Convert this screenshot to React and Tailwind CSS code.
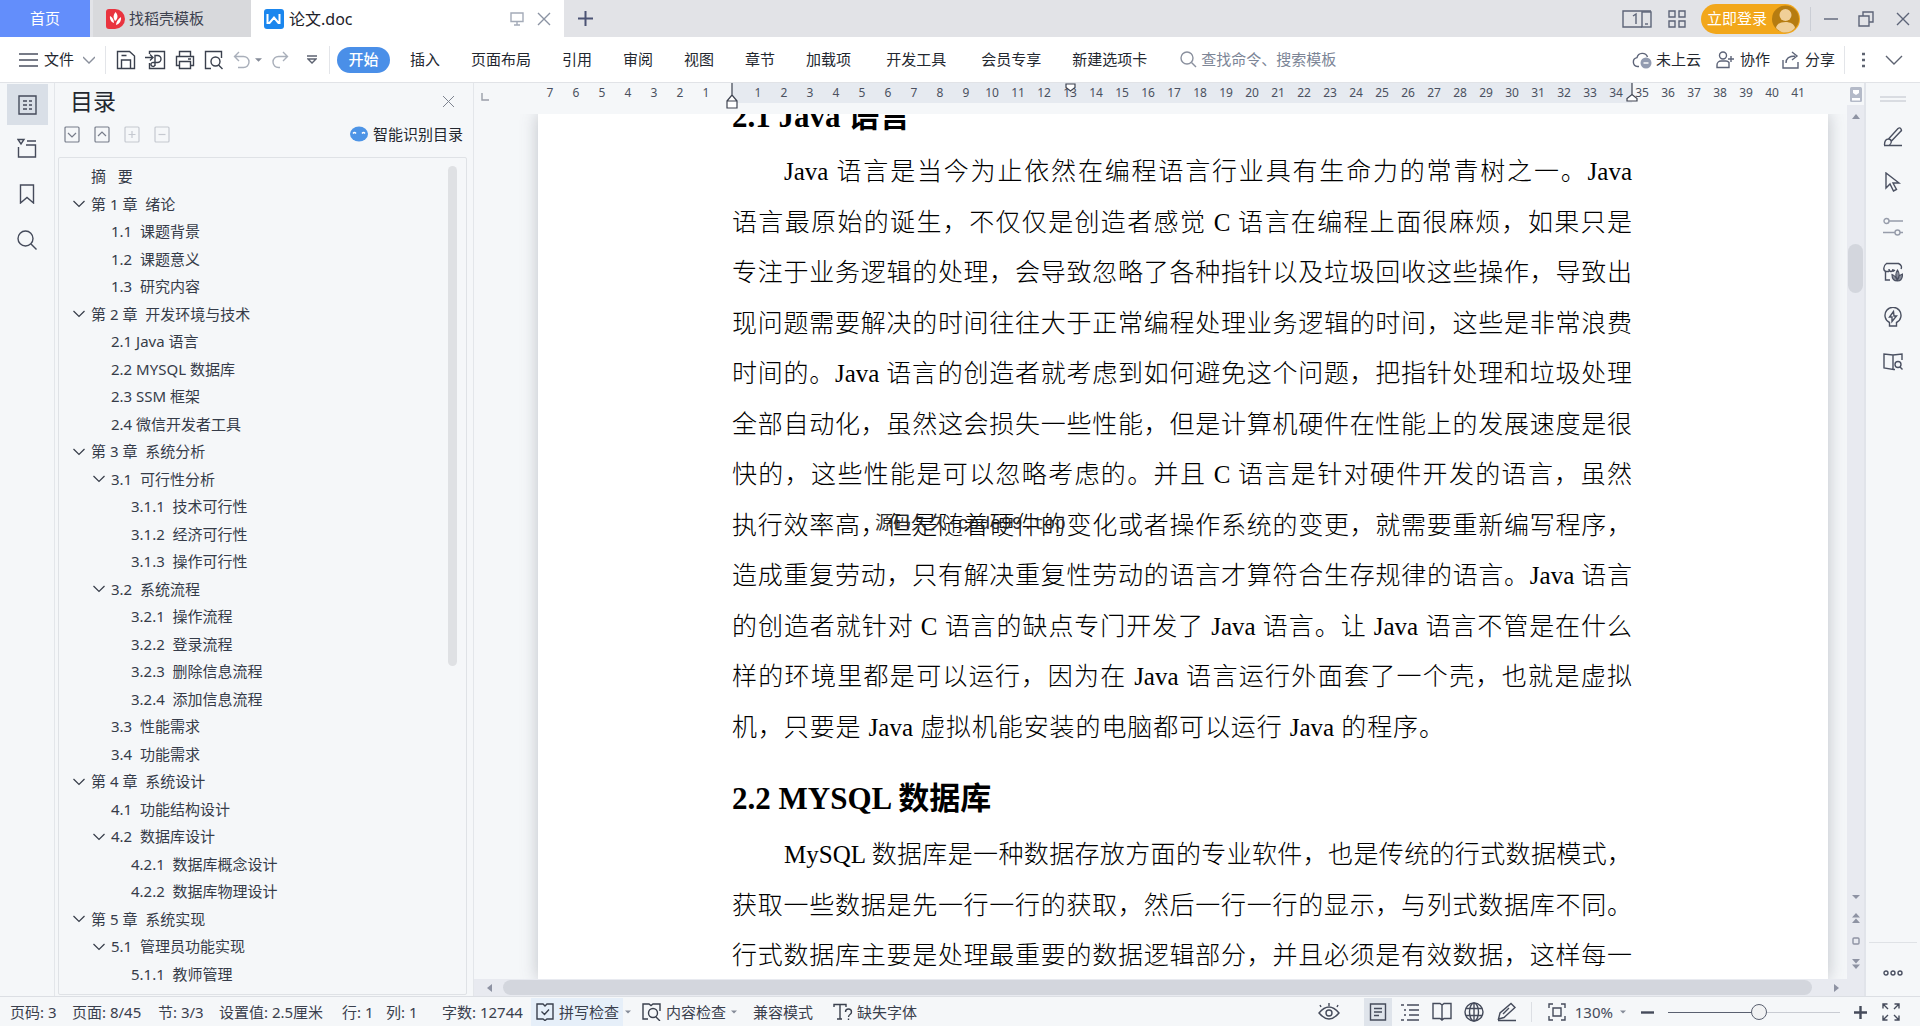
import React, { useState } from 'react'
import clsx from 'clsx'

const MENU = ['插入', '页面布局', '引用', '审阅', '视图', '章节', '加载项', '开发工具', '会员专享', '新建选项卡']

// level, title, has children
const OUTLINE = [
  [0, '摘   要', false],
  [0, '第 1 章  绪论', true],
  [1, '1.1  课题背景', false],
  [1, '1.2  课题意义', false],
  [1, '1.3  研究内容', false],
  [0, '第 2 章  开发环境与技术', true],
  [1, '2.1 Java 语言', false],
  [1, '2.2 MYSQL 数据库', false],
  [1, '2.3 SSM 框架', false],
  [1, '2.4 微信开发者工具', false],
  [0, '第 3 章  系统分析', true],
  [1, '3.1  可行性分析', true],
  [2, '3.1.1  技术可行性', false],
  [2, '3.1.2  经济可行性', false],
  [2, '3.1.3  操作可行性', false],
  [1, '3.2  系统流程', true],
  [2, '3.2.1  操作流程', false],
  [2, '3.2.2  登录流程', false],
  [2, '3.2.3  删除信息流程', false],
  [2, '3.2.4  添加信息流程', false],
  [1, '3.3  性能需求', false],
  [1, '3.4  功能需求', false],
  [0, '第 4 章  系统设计', true],
  [1, '4.1  功能结构设计', false],
  [1, '4.2  数据库设计', true],
  [2, '4.2.1  数据库概念设计', false],
  [2, '4.2.2  数据库物理设计', false],
  [0, '第 5 章  系统实现', true],
  [1, '5.1  管理员功能实现', true],
  [2, '5.1.1  教师管理', false],
]

const INDENT = ['pl-[12px]', 'pl-[32px]', 'pl-[52px]']

const JAVA_LINES = [
  'Java 语言是当今为止依然在编程语言行业具有生命力的常青树之一。Java',
  '语言最原始的诞生，不仅仅是创造者感觉 C 语言在编程上面很麻烦，如果只是',
  '专注于业务逻辑的处理，会导致忽略了各种指针以及垃圾回收这些操作，导致出',
  '现问题需要解决的时间往往大于正常编程处理业务逻辑的时间，这些是非常浪费',
  '时间的。Java 语言的创造者就考虑到如何避免这个问题，把指针处理和垃圾处理',
  '全部自动化，虽然这会损失一些性能，但是计算机硬件在性能上的发展速度是很',
  '快的，这些性能是可以忽略考虑的。并且 C 语言是针对硬件开发的语言，虽然',
  '执行效率高，但是随着硬件的变化或者操作系统的变更，就需要重新编写程序，',
  '造成重复劳动，只有解决重复性劳动的语言才算符合生存规律的语言。Java 语言',
  '的创造者就针对 C 语言的缺点专门开发了 Java 语言。让 Java 语言不管是在什么',
  '样的环境里都是可以运行，因为在 Java 语言运行外面套了一个壳，也就是虚拟',
  '机，只要是 Java 虚拟机能安装的电脑都可以运行 Java 的程序。',
]

const MYSQL_LINES = [
  'MySQL 数据库是一种数据存放方面的专业软件，也是传统的行式数据模式，',
  '获取一些数据是先一行一行的获取，然后一行一行的显示，与列式数据库不同。',
  '行式数据库主要是处理最重要的数据逻辑部分，并且必须是有效数据，这样每一',
]

const RULER = [7, 6, 5, 4, 3, 2, 1, '', ...Array.from({ length: 41 }, (_, i) => i + 1)]

function Svg({ w = 20, h = w, sw = 1.4, className, children }) {
  return (
    <svg
      width={w}
      height={h}
      viewBox={`0 0 ${w} ${h}`}
      fill="none"
      stroke="currentColor"
      strokeWidth={sw}
      className={clsx('block shrink-0', className)}
      aria-hidden="true"
    >
      {children}
    </svg>
  )
}

function IconButton({ label, className, children }) {
  return (
    <button type="button" aria-label={label} className={clsx('flex shrink-0 items-center justify-center', className)}>
      {children}
    </button>
  )
}

const Caret = ({ className }) => (
  <Svg w={8} h={4} className={className}>
    <path d="M0 0h8L4 4z" fill="currentColor" stroke="none" />
  </Svg>
)

function TitleBar() {
  return (
    <header className="flex h-[37px] shrink-0 bg-[#e2e3e7] text-[15px]">
      <button type="button" className="w-[90px] bg-[#638efb] text-white">首页</button>
      <button type="button" className="ml-[3px] flex w-[158px] items-center gap-1 bg-[#d8d9dc] pl-[13px] text-[#3d4250]">
        <Svg w={19} h={20}>
          <path d="M0 3a3 3 0 0 1 3-3h6a10 10 0 0 1 0 20H3a3 3 0 0 1-3-3z" fill="#e9333f" stroke="none" />
          <path d="M9.500 3c3 3 2.500 7-.5 9-2-3-2-6 .5-9zM4 7c2 1 4 3.500 4 7-3-1-4.500-4-4-7zM15 8c.5 4-1.500 7-5 8 0-3 2-6 5-8z" fill="#fff" stroke="none" />
        </Svg>
        找稻壳模板
      </button>
      <div className="flex w-[313px] items-center bg-white pl-[13px] text-[#1d2129]">
        <Svg w={20} h={20}>
          <rect width="20" height="20" rx="3" fill="#1a86ee" stroke="none" />
          <path d="M3.500 5v9h2L10 8.500l4.500 5.500h1V5" stroke="#fff" strokeWidth="2" />
        </Svg>
        <span className="ml-[5px] flex-1 text-base">论文.doc</span>
        <Svg w={14} h={14} className="text-[#a4abb8]">
          <path d="M1 1h12v8.500H1zM7 9.500V13M4 13h6" />
        </Svg>
        <IconButton label="关闭标签" className="mx-[13px] text-[#8b93a3]">
          <Svg w={14}><path d="M1 1l12 12M13 1L1 13" /></Svg>
        </IconButton>
      </div>
      <IconButton label="新建标签" className="w-[43px] text-[#4b5374]">
        <Svg w={15} sw={2}><path d="M7.500 0v15M0 7.500h15" /></Svg>
      </IconButton>
      <div className="ml-auto flex items-center pr-[10px] text-[#5d6478]">
        <IconButton label="视图模式">
          <Svg w={30} h={18}>
            <path d="M20 17H1V1h28M11 6l3-2v10" />
            <rect x="20" y="2" width="9" height="15" />
            <path d="M23 14h3" />
          </Svg>
        </IconButton>
        <IconButton label="应用" className="ml-4">
          <Svg w={18}>
            <path d="M1 1h6v6H1zM11 1h6v6h-6zM1 11h6v6H1zM11 11h6v6h-6z" />
          </Svg>
        </IconButton>
        <button type="button" className="ml-[15px] flex h-[30px] w-[99px] items-center justify-between rounded-full bg-[#f2a71b] pr-px pl-[6px] text-white">
          立即登录
          <Svg w={27} h={28}>
            <circle cx="13.500" cy="14" r="13.500" fill="#b67c10" stroke="none" />
            <circle cx="13.500" cy="10" r="6" fill="#f0cf98" stroke="none" />
            <path d="M4 23c1-8 18-8 19 0-5 6-14 6-19 0z" fill="#f0cf98" stroke="none" />
          </Svg>
        </button>
        <span className="mr-[11px] ml-[10px] h-6 w-px bg-[#cbced5]" />
        <IconButton label="最小化" className="w-[18px]">
          <Svg w={14}><path d="M0 7h14" /></Svg>
        </IconButton>
        <IconButton label="还原" className="ml-[18px] w-[16px]">
          <Svg w={16}><path d="M1 5h10v10H1zM5 5V1h10v10h-4" /></Svg>
        </IconButton>
        <IconButton label="关闭" className="ml-[22px] w-[14px]">
          <Svg w={14}><path d="M1 1l12 12M13 1L1 13" /></Svg>
        </IconButton>
      </div>
    </header>
  )
}

function Ribbon() {
  return (
    <div className="flex h-[46px] shrink-0 items-center border-b border-[#e1e3e7] bg-white text-[15px] text-[#23272f]">
      <button type="button" className="ml-[19px] flex items-center">
        <Svg w={19} h={16} className="text-[#4b5060]"><path d="M0 2h19M0 8h19M0 14h19" /></Svg>
        <span className="ml-[6px]">文件</span>
        <Svg w={12} h={8} className="ml-[9px] text-[#8a909c]"><path d="M0 1l6 6 6-6" /></Svg>
      </button>
      <span className="ml-[10px] h-7 w-px bg-[#e3e5e9]" />
      <div className="ml-[10px] flex items-center gap-[9px] text-[#3a404d]">
        <IconButton label="保存">
          <Svg>
            <path d="M1.500 1.500h12l5 4.500v12.500h-17zM5.500 18.500V10h9v8.500M5.500 5.500h5" />
          </Svg>
        </IconButton>
        <IconButton label="输出为PDF">
          <Svg w={21} h={20}>
            <path d="M4.500 4V1.500h15v17h-15V13M0 7.500h7M5 4.500l3 3-3 3M10 16V5.500h2.500a3 3 0 0 1 0 7H8.500a2 2 0 1 0 1.500 2" />
          </Svg>
        </IconButton>
        <IconButton label="打印">
          <Svg>
            <path d="M4.500 6V1.500h11V6M4.500 15.500h-3V6.500h17v9h-3M4.500 11.500h11v7h-11zM13 9h3" />
          </Svg>
        </IconButton>
        <IconButton label="打印预览">
          <Svg>
            <path d="M7 18.500H1.500v-17h16V8M14.500 15l4 4" />
            <circle cx="11.500" cy="11.500" r="4.500" />
          </Svg>
        </IconButton>
      </div>
      <div className="flex items-center text-[#a9afba]">
        <IconButton label="撤销" className="ml-[9px]">
          <Svg w={17} h={18}><path d="M6 1L1.500 5.500 6 10M2 5.500h8.500a5.500 5.500 0 0 1 0 11H5" /></Svg>
        </IconButton>
        <Caret className="ml-[5px] w-[7px] text-[#858b98]" />
        <IconButton label="恢复" className="ml-[10px]">
          <Svg w={17} h={18}><path d="M11 1l4.500 4.500L11 10M15 5.500H6.500a5.500 5.500 0 0 0 0 11H8" /></Svg>
        </IconButton>
        <IconButton label="更多" className="ml-[18px] text-[#5d6371]">
          <Svg w={10} h={9}><path d="M0 1h10M1 4l4 4 4-4z" /></Svg>
        </IconButton>
      </div>
      <span className="ml-[12px] h-7 w-px bg-[#e3e5e9]" />
      <nav className="ml-[7px] flex items-center gap-[31px] whitespace-nowrap">
        <button type="button" className="-mr-[11px] h-[26px] w-[53px] rounded-full bg-[#4a8fe8] font-medium text-white">开始</button>
        {MENU.map((item) => (
          <button type="button" key={item} className={item === '开发工具' ? 'mx-1' : undefined}>{item}</button>
        ))}
      </nav>
      <label className="ml-[33px] flex items-center gap-1 text-[#8a909e]">
        <Svg w={17}>
          <circle cx="7" cy="7" r="6" />
          <path d="M11.500 11.500L16 16" />
        </Svg>
        <input type="text" aria-label="查找命令" placeholder="查找命令、搜索模板" className="w-[150px] bg-transparent outline-none placeholder:text-[#7c8596]" />
      </label>
      <div className="ml-auto flex items-center whitespace-nowrap">
        <button type="button" className="flex items-center gap-1">
          <Svg w={20} h={18} className="text-[#5d6478]">
            <path d="M7 15.500H5.500A4.500 4.500 0 0 1 5 6.600 5.500 5.500 0 0 1 15.500 6" />
            <circle cx="14" cy="12" r="5.500" fill="#929bb0" stroke="none" />
            <path d="M11.500 12h5" stroke="#fff" />
          </Svg>
          未上云
        </button>
        <button type="button" className="ml-[15px] flex items-center gap-[6px]">
          <Svg w={18} className="text-[#5d6478]">
            <circle cx="7" cy="4.500" r="3.500" />
            <path d="M10 16.500H1V14a4 4 0 0 1 4-4h5a4 4 0 0 1 3 1.500v5h-3M15 5v6M12 8h6" />
          </Svg>
          协作
        </button>
        <button type="button" className="ml-[12px] flex items-center gap-[5px]">
          <Svg w={18} className="text-[#5d6478]">
            <path d="M1 9v8h15v-6M4 12c0-5 3-7 9-7M10 1l5 4-5 4" />
          </Svg>
          分享
        </button>
        <span className="ml-[9px] h-7 w-px bg-[#e3e5e9]" />
        <IconButton label="更多选项" className="ml-[17px] text-[#5d6371]">
          <Svg w={3} h={16}><path d="M0 2h3M0 8h3M0 14h3" strokeWidth="2.400" /></Svg>
        </IconButton>
        <IconButton label="折叠功能区" className="mr-[17px] ml-[20px] text-[#5d6371]">
          <Svg w={18} h={10}><path d="M1 1l8 8 8-8" /></Svg>
        </IconButton>
      </div>
    </div>
  )
}

function LeftRail() {
  return (
    <aside className="flex w-[55px] shrink-0 flex-col items-center border-r border-[#e3e6ea] pt-px text-[#454b5b]">
      <IconButton label="目录" className="h-[41px] w-[41px] bg-[#d9dfe7]">
        <Svg w={19} h={20}>
          <path d="M1 1h17v18H1zM5 6h4M11 6h3M5 10h4M11 10h3M5 14h4M11 14h3" />
        </Svg>
      </IconButton>
      <IconButton label="章节" className="h-[46px] w-[41px]">
        <Svg w={20}>
          <path d="M1 1.500h6L4 6zM10 3h9M1.500 9v10h17V7H9" />
        </Svg>
      </IconButton>
      <IconButton label="书签" className="h-[46px] w-[41px]">
        <Svg w={16} h={20}><path d="M1.500 1h13v18L8 13.500 1.500 19z" /></Svg>
      </IconButton>
      <IconButton label="查找" className="h-[45px] w-[41px]">
        <Svg w={20}>
          <circle cx="8.500" cy="8.500" r="7.500" />
          <path d="M14 14l5.500 5.500" />
        </Svg>
      </IconButton>
    </aside>
  )
}

const BOX_ICONS = [
  ['展开', 'M4 7l4 4 4-4', 'text-[#777d8a]'],
  ['收起', 'M4 10l4-4 4 4', 'text-[#777d8a]'],
  ['增加级别', 'M8 5v7M4.500 8.500h7', 'text-[#c5c9d0]'],
  ['降低级别', 'M4.500 8.500h7', 'text-[#c5c9d0]'],
]

function OutlinePanel() {
  return (
    <section className="flex w-[419px] shrink-0 flex-col border-r border-[#e3e6ea] pr-[6px] pl-[3px]">
      <div className="flex h-[36px] items-center justify-between pr-[12px] pl-[12px]">
        <h1 className="text-[23px] leading-[36px] text-[#23272f]">目录</h1>
        <IconButton label="关闭目录" className="text-[#7d8390]">
          <Svg w={13} sw={1}><path d="M1 1l11 11M12 1L1 12" /></Svg>
        </IconButton>
      </div>
      <div className="flex h-[30px] items-center gap-[14px] pr-1 pl-[6px]">
        {BOX_ICONS.map(([label, d, color]) => (
          <IconButton key={label} label={label} className={color}>
            <Svg w={16} h={17} sw={1.2}>
              <rect x="1" y="1" width="14" height="15" rx="1" />
              <path d={d} />
            </Svg>
          </IconButton>
        ))}
        <button type="button" className="ml-auto flex items-center gap-[5px] text-[15px] text-[#23272f]">
          <Svg w={18} h={16}>
            <ellipse cx="9" cy="8" rx="9" ry="7.500" fill="#4d94e6" stroke="none" />
            <path d="M3 7.500q1.500-2 3 0M12 7.500q1.500-2 3 0" stroke="#fff" />
          </Svg>
          智能识别目录
        </button>
      </div>
      <div className="mt-[8px] mb-px flex min-h-0 flex-1 overflow-hidden rounded-xs border border-[#dfe2e6]">
        <ul className="flex-1 pt-[5px] text-[15px] text-[#363c49]">
          {OUTLINE.map(([level, title, open]) => (
            <li key={title} className={clsx('flex h-[27px] items-center even:h-[28px]', INDENT[level])}>
              <span className="flex w-5 items-center justify-start pl-[2px]">
                {open && (
                  <IconButton label="折叠">
                    <Svg w={12} h={8} sw={1.2}><path d="M.5 1L6 6.500 11.500 1" /></Svg>
                  </IconButton>
                )}
              </span>
              <a href="#outline" className="whitespace-pre">{title}</a>
            </li>
          ))}
        </ul>
        <div className="mt-2 mr-[9px] h-[500px] w-[9px] rounded-full bg-[#dfe1e4]" />
      </div>
    </section>
  )
}

function Ruler() {
  return (
    <div className="relative flex h-[31px] shrink-0 overflow-hidden text-xs leading-[20px] text-[#4b5160]">
      <div className="absolute top-0 left-[258px] h-[20px] w-[900px] bg-[#e6eaf0]" />
      <Svg w={8} className="mt-[10px] ml-[7px] text-[#9a9fa9]"><path d="M1 0v7h7" /></Svg>
      <div className="relative ml-[48px] flex">
        {RULER.map((n, i) => (
          <span key={i} className="w-[26px] shrink-0 text-center">{n}</span>
        ))}
      </div>
      <Svg w={12} h={26} sw={1.2} className="absolute top-0 left-[252px] text-[#3e4350]">
        <path d="M6 0v12M1 25v-7h10v7zM1 18l5-6 5 6" fill="#fff" />
      </Svg>
      <Svg w={11} h={9} sw={1.2} className="absolute top-0 left-[591px] text-[#3e4350]">
        <path d="M1 1h9v3.500L5.500 8 1 4.500z" fill="#fff" />
      </Svg>
      <Svg w={12} h={19} sw={1.2} className="absolute top-0 left-[1152px] text-[#3e4350]">
        <path d="M6 0v12M1 18v-2.500l5-4 5 4V18z" fill="#fff" />
      </Svg>
    </div>
  )
}

function DocLine({ children, first, last }) {
  return (
    <span
      className={clsx(
        'relative block whitespace-nowrap leading-[50px] [text-align-last:justify] even:leading-[51px]',
        first && 'pl-[52px]',
        last && 'pr-[188px]'
      )}
    >
      {children}
    </span>
  )
}

function Page() {
  return (
    <article className="mr-[19px] ml-16 flex-1 overflow-hidden bg-white pr-[196px] pl-[194px] font-['Liberation_Serif','Noto_Sans_CJK_SC',serif] text-[25px] text-black shadow-[0_0_16px_rgba(90,95,110,0.35)]">
      <h2 className="-mt-[27px] text-[31px] leading-[60px] font-bold">2.1 Java 语言</h2>
      <p className="font-light">
        {JAVA_LINES.map((line, i) => (
          <DocLine key={line} first={i === 0} last={i === JAVA_LINES.length - 1}>
            {line}
            {i === 7 && (
              <span className="absolute top-0 left-[143px] font-['Liberation_Mono','Noto_Sans_CJK_SC',monospace] text-lg leading-[48px] font-normal text-[#2c2c2c]">
                源码久久-code99.top
              </span>
            )}
          </DocLine>
        ))}
      </p>
      <h2 className="pt-[15px] text-[31px] leading-[62px] font-bold">2.2 MYSQL 数据库</h2>
      <p className="font-light">
        {MYSQL_LINES.map((line, i) => (
          <DocLine key={line} first={i === 0}>{line}</DocLine>
        ))}
      </p>
    </article>
  )
}

function VerticalScrollbar() {
  return (
    <div className="flex w-[19px] shrink-0 flex-col items-center border-r-2 border-[#e1e4ea] text-[#8e93a3]">
      <Svg w={12} h={15} className="mt-1">
        <rect width="12" height="15" rx="1.500" fill="#b4bac8" stroke="none" />
        <path d="M3 3h6v3L6 8 3 6zM2 11h8v2.500H2z" fill="#fff" stroke="none" />
      </Svg>
      <div className="mt-[3px] flex w-full flex-1 flex-col items-center bg-[#e8eaf0] pt-[9px]">
        <Svg w={8} h={5}><path d="M0 5h8L4 0z" fill="currentColor" stroke="none" /></Svg>
        <div className="mt-[125px] h-[49px] w-[15px] rounded-full bg-[#d3d6dd]" />
        <div className="mt-auto flex flex-col items-center gap-[14px] pb-[27px]">
          <Caret />
          <Svg w={8} h={10}><path d="M0 4.500h8L4 0zM0 10h8L4 5.500z" fill="currentColor" stroke="none" /></Svg>
          <Svg w={8}><rect x="1" y="1" width="6" height="6" rx="1" /></Svg>
          <Svg w={8} h={10}><path d="M0 0h8L4 4.500zM0 5.500h8L4 10z" fill="currentColor" stroke="none" /></Svg>
        </div>
      </div>
    </div>
  )
}

function RightRail() {
  return (
    <aside className="flex w-[54px] shrink-0 flex-col items-center text-[#4a5061]">
      <Svg w={26} h={6} sw={1} className="mt-[13px] mb-[12px] text-[#bdc1ca]"><path d="M0 1h26M0 5h26" /></Svg>
      <IconButton label="样式" className="h-[45px] w-10">
        <Svg w={20}><path d="M1 18.500h18M1.500 18c0-3 1-6 4-6s4 4 1 6M5.500 12l9.500-10.500q2-1.500 3 .5t0 2L8.500 14" /></Svg>
      </IconButton>
      <IconButton label="选择" className="h-[45px] w-10">
        <Svg w={18} h={20}><path d="M2 1v15l4-4 3.500 7 3-1.500-3.500-6.500h6z" /></Svg>
      </IconButton>
      <IconButton label="属性" className="h-[45px] w-10 text-[#979dab]">
        <Svg w={20}>
          <circle cx="3.500" cy="4" r="2.500" />
          <circle cx="14.500" cy="15.500" r="2.500" />
          <path d="M6 4h14M0 15.500h12M17 15.500h3" />
        </Svg>
      </IconButton>
      <IconButton label="稻壳资源" className="h-[45px] w-10">
        <Svg w={20}>
          <path d="M2.500 10v8H7M6 9.500H3C0 9 0 4 3.500 1.500h12C18.500 3 19 5 18 7M6 7q0 2.500 2 2.500T10 7M12 8l-2 1.500" />
          <path d="M14.500 8c-2 3-2 7 0 10 2-3 2-7 0-10zM9 12.500c0 4 2 6.500 5.500 6.500 3.500 0 5-3 5-7-3 1-5 4-5 7-1-3-2.500-5.500-5.500-6.500z" strokeWidth="1.200" fill="#8a8f9c" />
        </Svg>
      </IconButton>
      <IconButton label="灵感" className="h-[45px] w-10">
        <Svg w={20}>
          <path d="M6.500 15.500a8 8 0 1 1 7 0v3.500h-7zM10.500 4.500l-4 5.500H9v4.500l4.500-5.500H11z" />
        </Svg>
      </IconButton>
      <IconButton label="词典" className="h-[45px] w-10">
        <Svg w={20}>
          <path d="M10 3v14.500L1 16V2l9 1 9-1v6M10 17.500h2" />
          <circle cx="15" cy="12.500" r="3" />
          <path d="M17 15l2.500 2.500" />
        </Svg>
      </IconButton>
      <div className="mt-auto mb-5 flex w-12 justify-center border-t border-[#dfe2e6] pt-[27px]">
        <IconButton label="更多工具">
          <Svg w={20} h={6}>
            <circle cx="3" cy="3" r="2" />
            <circle cx="10" cy="3" r="2" />
            <circle cx="17" cy="3" r="2" />
          </Svg>
        </IconButton>
      </div>
    </aside>
  )
}

function StatusBar() {
  const [zoom, setZoom] = useState(53)

  return (
    <footer className="flex h-[30px] shrink-0 items-center border-t border-[#dcdfe4] pt-px text-[15px] whitespace-nowrap text-[#3a404d]">
      <span className="ml-[10px] w-[62px]">页码: 3</span>
      <span className="w-[86px]">页面: 8/45</span>
      <span className="w-[61px]">节: 3/3</span>
      <span className="w-[123px]">设置值: 2.5厘米</span>
      <span className="w-[44px]">行: 1</span>
      <span className="w-[56px]">列: 1</span>
      <span className="w-[89px]">字数: 12744</span>
      <button type="button" className="flex h-full w-[92px] items-center gap-[5px] bg-[#e6eff9] pl-[5px]">
        <Svg w={18}><path d="M9 3L7 1H1v15h6l2 1.500 2-1.500h6V1h-6zM5.500 8.500l3 3 4.500-5" /></Svg>
        拼写检查
      </button>
      <Caret className="ml-[2px] w-[6px] text-[#858b98]" />
      <button type="button" className="ml-[11px] flex items-center gap-[4px]">
        <Svg w={20} h={18}>
          <path d="M6 16H1V1h6l2 1.500L11 1h7v7M14 14l4 4" />
          <circle cx="11" cy="10" r="4.500" />
        </Svg>
        内容检查
      </button>
      <Caret className="ml-[5px] w-[6px] text-[#858b98]" />
      <button type="button" className="ml-[16px]">兼容模式</button>
      <button type="button" className="ml-[20px] flex items-center gap-[4px]">
        <Svg w={20} h={18}>
          <path d="M1 4V1.500h12V4M7 1.500V16M4 16h5M12.500 9q0-3 3-3t3 3q0 1.500-1.500 2.500T15.500 14M15.500 15.500V17" />
        </Svg>
        缺失字体
      </button>
      <div className="ml-auto flex items-center text-[#454b5b]">
        <IconButton label="护眼模式" className="w-[22px]">
          <Svg w={22} h={18}>
            <path d="M1 10q10-12 20 0-10 12-20 0zM3 4L2 2M19 4l1-2M11 3V0" />
            <circle cx="11" cy="10" r="3" />
          </Svg>
        </IconButton>
        <IconButton label="页面视图" className="ml-[24px] h-[28px] w-[28px] bg-[#dfe4eb]">
          <Svg w={18}><path d="M1.500 1h15v16h-15zM5 5.500h8M5 9h8M5 12.500h5" /></Svg>
        </IconButton>
        <IconButton label="大纲" className="ml-[9px]">
          <Svg w={18}><path d="M0 2h3M6 2h12M3 7h2M8 7h10M3 12h2M8 12h10M0 17h3M6 17h12" /></Svg>
        </IconButton>
        <IconButton label="阅读版式" className="ml-[13px]">
          <Svg w={20}><path d="M10 3L8 1.500H1v15h7l2 1.500 2-1.500h7v-15h-7zM10 3v15" /></Svg>
        </IconButton>
        <IconButton label="Web版式" className="ml-[12px]">
          <Svg w={20}>
            <circle cx="10" cy="10" r="9" />
            <ellipse cx="10" cy="10" rx="4.500" ry="9" />
            <path d="M2 6.500h16M2 13.500h16M10 1v18" />
          </Svg>
        </IconButton>
        <IconButton label="写作模式" className="ml-[13px]">
          <Svg w={20}><path d="M1 18.500h18M1.500 17l1.500-6L14 1.500l4 4L7 15.500zM12 6l-6 6" /></Svg>
        </IconButton>
        <span className="ml-[14px] h-5 w-px bg-[#dcdfe4]" />
        <IconButton label="最佳显示比例" className="ml-[16px]">
          <Svg w={18}><path d="M1 5V1h4M13 1h4v4M17 13v4h-4M5 17H1v-4M5 5h8v8H5z" /></Svg>
        </IconButton>
        <button type="button" className="ml-[9px] flex items-center gap-[7px]">
          130%
          <Caret className="w-[6px] text-[#858b98]" />
        </button>
        <IconButton label="缩小" className="ml-[15px]">
          <Svg w={13} sw={2.4}><path d="M0 6.500h13" /></Svg>
        </IconButton>
        <input
          type="range"
          aria-label="缩放级别"
          min="0"
          max="100"
          value={zoom}
          onChange={(e) => setZoom(Number(e.target.value))}
          className="ml-[14px] h-4 w-[172px] appearance-none bg-[linear-gradient(to_right,#5a6070_53%,#c9ccd3_53%)] bg-[length:100%_1px] bg-center bg-no-repeat [&::-webkit-slider-thumb]:h-4 [&::-webkit-slider-thumb]:w-4 [&::-webkit-slider-thumb]:appearance-none [&::-webkit-slider-thumb]:rounded-full [&::-webkit-slider-thumb]:border [&::-webkit-slider-thumb]:border-solid [&::-webkit-slider-thumb]:border-[#5a6070] [&::-webkit-slider-thumb]:bg-[#f1f2f3]"
        />
        <IconButton label="放大" className="ml-[14px]">
          <Svg w={13} sw={2.4}><path d="M0 6.500h13M6.500 0v13" /></Svg>
        </IconButton>
        <IconButton label="全屏" className="mr-[20px] ml-[15px]">
          <Svg w={18}>
            <path d="M1 5.500V1h4.500M1 1l5 5M12.500 1H17v4.500M17 1l-5 5M17 12.500V17h-4.500M17 17l-5-5M5.500 17H1v-4.500M1 17l5-5" />
          </Svg>
        </IconButton>
      </div>
    </footer>
  )
}

export default function App() {
  return (
    <div lang="zh-CN" className="flex h-screen flex-col overflow-hidden bg-[#f5f7f9] font-['Noto_Sans','Noto_Sans_CJK_SC',sans-serif]">
      <TitleBar />
      <Ribbon />
      <div className="flex min-h-0 flex-1">
        <LeftRail />
        <OutlinePanel />
        <main className="flex min-w-0 flex-1 flex-col">
          <Ruler />
          <div className="flex min-h-0 flex-1 overflow-hidden">
            <Page />
          </div>
          <div className="flex h-[17px] shrink-0 items-center bg-[#e8eaf0] pr-[8px] pl-[13px] text-[#8e93a3]">
            <Svg w={5} h={8}><path d="M5 0v8L0 4z" fill="currentColor" stroke="none" /></Svg>
            <div className="mr-[22px] ml-[11px] h-[15px] flex-1 rounded-full bg-[#d3d6dd]" />
            <Svg w={5} h={8}><path d="M0 0v8l5-4z" fill="currentColor" stroke="none" /></Svg>
          </div>
        </main>
        <VerticalScrollbar />
        <RightRail />
      </div>
      <StatusBar />
    </div>
  )
}
